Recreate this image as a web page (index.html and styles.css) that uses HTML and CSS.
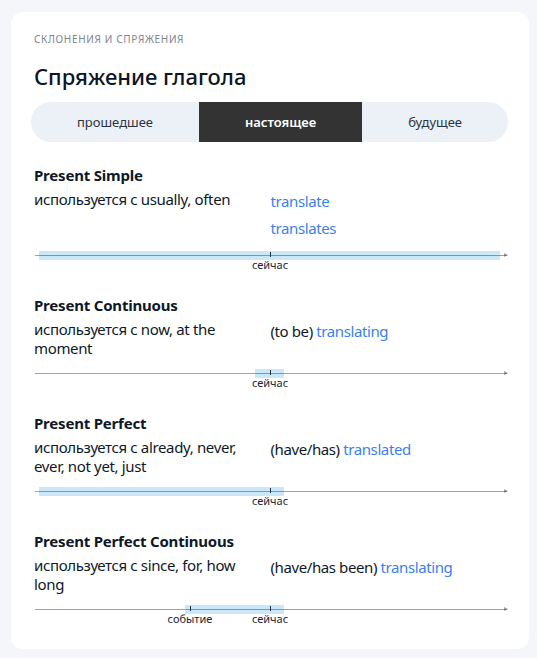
FILE: index.html
```html
<!DOCTYPE html>
<html lang="ru">
<head>
<meta charset="utf-8">
<link rel="stylesheet" href="styles.css">
</head>
<body>
<div class="card">
  <div class="eyebrow">Склонения и спряжения</div>
  <h1 class="title">Спряжение глагола</h1>
  <div class="tabs">
    <div class="tab">прошедшее</div>
    <div class="tab active">настоящее</div>
    <div class="tab">будущее</div>
  </div>

  <section class="tense">
    <h2 class="tense-name">Present Simple</h2>
    <div class="row">
      <div class="usage">используется с usually, often</div>
      <div class="forms">
        <div><span class="verb">translate</span></div>
        <div><span class="verb">translates</span></div>
      </div>
    </div>
    <div class="timeline">
      <div class="band" style="left:5px;right:7px"></div>
      <div class="axis"></div>
      <div class="mark" style="left:236px"><span class="tick"></span><span class="mlabel">сейчас</span></div>
    </div>
  </section>

  <section class="tense">
    <h2 class="tense-name">Present Continuous</h2>
    <div class="row">
      <div class="usage">используется с now, at the moment</div>
      <div class="forms">
        <div>(to be) <span class="verb">translating</span></div>
      </div>
    </div>
    <div class="timeline">
      <div class="band" style="left:221px;width:29px"></div>
      <div class="axis"></div>
      <div class="mark" style="left:236px"><span class="tick"></span><span class="mlabel">сейчас</span></div>
    </div>
  </section>

  <section class="tense">
    <h2 class="tense-name">Present Perfect</h2>
    <div class="row">
      <div class="usage">используется с already, never, ever, not yet, just</div>
      <div class="forms">
        <div>(have/has) <span class="verb">translated</span></div>
      </div>
    </div>
    <div class="timeline">
      <div class="band" style="left:5px;width:245px"></div>
      <div class="axis"></div>
      <div class="mark" style="left:236px"><span class="tick"></span><span class="mlabel">сейчас</span></div>
    </div>
  </section>

  <section class="tense">
    <h2 class="tense-name">Present Perfect Continuous</h2>
    <div class="row">
      <div class="usage">используется с since, for, how long</div>
      <div class="forms">
        <div>(have/has been) <span class="verb">translating</span></div>
      </div>
    </div>
    <div class="timeline">
      <div class="band" style="left:151px;width:99px"></div>
      <div class="axis"></div>
      <div class="mark" style="left:156px"><span class="tick"></span><span class="mlabel">событие</span></div>
      <div class="mark" style="left:236px"><span class="tick"></span><span class="mlabel">сейчас</span></div>
    </div>
  </section>
</div>
</body>
</html>
```

FILE: styles.css
```css
* { box-sizing: border-box; }
html, body { margin: 0; padding: 0; }
body {
  background: #f5f6fa;
  font-family: "Noto Sans", "Open Sans", sans-serif;
  color: #0e1828;
  padding: 12px 8px 9px 11px;
}
.card {
  background: #fff;
  border-radius: 12px;
  padding: 20px 22px 20px 23px;
  height: 637px;
}
.eyebrow {
  font-size: 10px;
  line-height: 14px;
  letter-spacing: 0.65px;
  text-transform: uppercase;
  color: #7d8593;
}
.title {
  margin: 16px 0 0;
  font-size: 22px;
  line-height: 28px;
  font-weight: 500;
  color: #0c1626;
}
.tabs {
  display: flex;
  margin: 12px -1px 0 -3px;
  height: 40px;
  background: #ecf0f7;
  border-radius: 20px;
  overflow: hidden;
}
.tab {
  flex: 1 1 auto;
  display: flex;
  align-items: center;
  justify-content: center;
  font-size: 13px;
  color: #2b3443;
}
.tab.active {
  background: #333333;
  color: #fff;
  font-weight: 600;
}
.tense { margin-top: 23px; }
.tense + .tense { margin-top: 20px; }
.tense-name {
  margin: 0;
  font-size: 15px;
  line-height: 20px;
  font-weight: 700;
  letter-spacing: -0.2px;
  color: #0e1828;
}
.row {
  display: grid;
  grid-template-columns: 1fr 1fr;
  margin-top: 5px;
}
.usage {
  font-size: 15px;
  line-height: 19px;
  letter-spacing: -0.35px;
  padding-right: 14px;
}
.forms {
  font-size: 15px;
  line-height: 27px;
  letter-spacing: -0.4px;
  margin-top: -2px;
  margin-bottom: -2px;
}
.verb { color: #3b7ff0; }
.timeline {
  position: relative;
  height: 34px;
  margin-top: 1px;
}
.axis {
  position: absolute;
  left: 1px;
  right: 0;
  top: 14px;
  height: 1px;
  background: rgba(40, 52, 70, 0.45);
}
.axis::after {
  content: "";
  position: absolute;
  right: -1px;
  top: -2px;
  border-left: 4px solid rgba(40, 52, 70, 0.45);
  border-top: 2.5px solid transparent;
  border-bottom: 2.5px solid transparent;
}
.band {
  position: absolute;
  top: 10px;
  height: 9px;
  background: #cbe8fb;
}
.mark {
  position: absolute;
  top: 11px;
  width: 0;
}
.tick {
  position: absolute;
  left: 0;
  top: 0;
  width: 1px;
  height: 5px;
  background: #1f2d3d;
}
.mlabel {
  position: absolute;
  top: 6px;
  left: 0;
  transform: translateX(-50%);
  font-size: 11px;
  line-height: 13px;
  white-space: nowrap;
  color: #1a2433;
}
```
